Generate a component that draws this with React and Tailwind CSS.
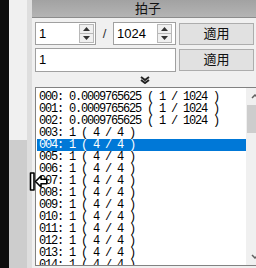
import React from "react";

const rows = [];
for (let i = 0; i < 15; i++) {
  const n = String(i).padStart(3, "0");
  rows.push(i < 3 ? `${n}: 0.0009765625 ( 1 / 1024 )` : `${n}: 1 ( 4 / 4 )`);
}

const Spinner = () => (
  <div className="flex flex-col w-[15px] h-[19px] border border-[#b8b8b8] bg-[#f0f0f0]">
    <div className="flex-1 flex items-center justify-center border-b border-[#b8b8b8]">
      <svg width="7" height="4" viewBox="0 0 7 4">
        <path d="M3.5 0 L7 4 L0 4 Z" fill="#333" />
      </svg>
    </div>
    <div className="flex-1 flex items-center justify-center">
      <svg width="7" height="4" viewBox="0 0 7 4">
        <path d="M0 0 L7 0 L3.5 4 Z" fill="#333" />
      </svg>
    </div>
  </div>
);

const ui = { fontFamily: '"Liberation Sans", "Noto Sans CJK JP", sans-serif' };
const mono = { fontFamily: '"Liberation Mono", "DejaVu Sans Mono", monospace' };

export default function App() {
  return (
    <div className="relative flex w-[256px] h-[268px] overflow-hidden bg-[#f0f0f0]" style={ui}>
      {/* left edge */}
      <div className="w-[9px] shrink-0 bg-[#0d0d0d]" />
      <div className="w-[18px] shrink-0 flex flex-col">
        <div className="h-[140px] bg-[#f0f0f0]" />
        <div className="flex-1 bg-[#cdcdcd]" />
      </div>
      <div className="w-[5px] shrink-0 bg-[#dedede]" />

      {/* panel */}
      <div className="w-[232px] shrink-0 flex flex-col">
        <div className="h-[18px] flex items-center justify-center bg-gradient-to-b from-[#a2a2a2] to-[#b4b4b4] border-b border-[#8c8c8c] text-[13px] text-[#111]">
          拍子
        </div>

        <div className="pl-[3px] pr-[9px] pt-[4px] flex flex-col">
          {/* row 1 */}
          <div className="flex items-center h-[23px]">
            <div className="w-[61px] h-[23px] flex items-center justify-between bg-white border border-[#a0a0a0] pl-[3px] pr-[1px] text-[13px]">
              <span>1</span>
              <Spinner />
            </div>
            <div className="w-[17px] text-center text-[13px] text-[#333]">/</div>
            <div className="w-[63px] h-[23px] flex items-center justify-between bg-white border border-[#a0a0a0] pl-[3px] pr-[3px] text-[13px]">
              <span>1024</span>
              <Spinner />
            </div>
            <button className="ml-[3px] w-[75px] h-[22px] bg-[#e1e1e1] border border-[#adadad] text-[13px] text-[#111] flex items-center justify-center">
              適用
            </button>
          </div>

          {/* row 2 */}
          <div className="flex items-center h-[24px] mt-[3px]">
            <div className="w-[141px] h-[24px] flex items-center bg-white border border-[#a0a0a0] pl-[3px] text-[13px]">
              1
            </div>
            <button className="ml-[3px] w-[75px] h-[22px] bg-[#e1e1e1] border border-[#adadad] text-[13px] text-[#111] flex items-center justify-center">
              適用
            </button>
          </div>

          {/* expander */}
          <div className="h-[15px] flex items-center justify-center">
            <svg width="10" height="8" viewBox="0 0 10 8">
              <path d="M1 1 L5 4 L9 1" stroke="#222" strokeWidth="2" fill="none" />
              <path d="M1 4 L5 7 L9 4" stroke="#222" strokeWidth="2" fill="none" />
            </svg>
          </div>
        </div>

        {/* list */}
        <div className="ml-[3px] h-[179px] flex bg-white border border-[#828282] overflow-hidden">
          <div className="flex-1 pt-[3px] pl-[1px]" style={mono}>
            {rows.map((r, i) => (
              <div
                key={i}
                className={`h-[12px] leading-[12px] text-[12px] tracking-[-1.2px] pl-[2px] whitespace-pre ${
                  i === 4 ? "bg-[#0078d7] text-white" : "text-black"
                }`}
              >
                {r}
              </div>
            ))}
          </div>
          <div className="w-[17px] shrink-0 flex flex-col bg-[#f0f0f0]">
            <div className="h-[17px] flex items-center justify-center">
              <svg width="8" height="5" viewBox="0 0 8 5">
                <path d="M1 4 L4 1 L7 4" stroke="#606060" strokeWidth="1.5" fill="none" />
              </svg>
            </div>
            <div className="h-[28px] mx-[1px] bg-[#cdcdcd]" />
            <div className="flex-1" />
            <div className="h-[17px] flex items-center justify-center">
              <svg width="8" height="5" viewBox="0 0 8 5">
                <path d="M1 1 L4 4 L7 1" stroke="#606060" strokeWidth="1.5" fill="none" />
              </svg>
            </div>
          </div>
        </div>
      </div>

      {/* mouse cursor (split / resize) */}
      <div className="absolute left-[29px] top-[172px] w-[19px] h-[19px] z-10">
        <svg width="19" height="19" viewBox="0 0 19 19" className="block">
          <g stroke="#000" strokeWidth="1.6" strokeLinejoin="round" fill="#fff">
            <rect x="1.5" y="1" width="3.5" height="17" />
            <path d="M6.5 9.5 L12 4 V7.2 H17.8 V11.8 H12 V15 Z" />
          </g>
        </svg>
      </div>
    </div>
  );
}
